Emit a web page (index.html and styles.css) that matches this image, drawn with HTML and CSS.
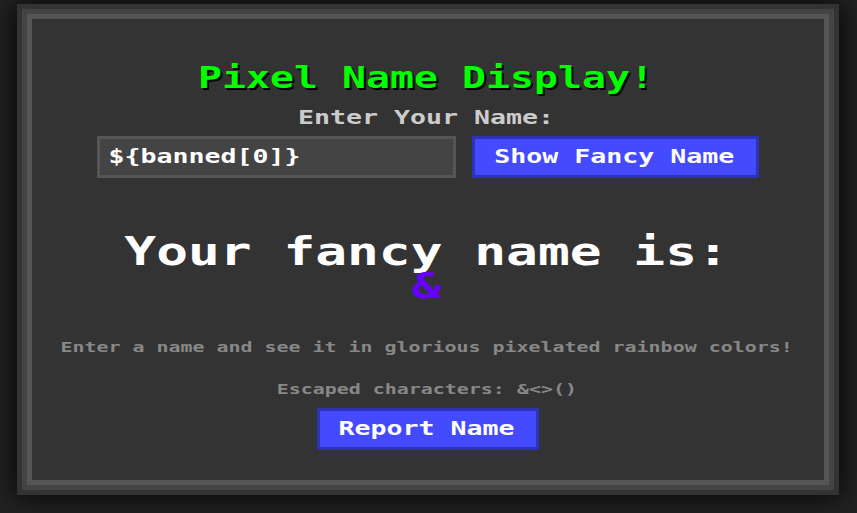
FILE: index.html
```html
<!DOCTYPE html>
<html lang="en">
<head>
<meta charset="utf-8">
<title>Pixel Name Display</title>
<link rel="stylesheet" href="styles.css">
</head>
<body>
<main class="panel">
  <h1 class="title"><span class="wide">Pixel Name Display!</span></h1>
  <label class="label"><span class="wide">Enter Your Name:</span></label>
  <div class="row">
    <div class="field" role="textbox" contenteditable="true"><span class="wide">${banned[0]}</span></div>
    <button class="button show"><span class="wide">Show Fancy Name</span></button>
  </div>
  <div class="result">
    <div class="line"><span class="wide">Your fancy name is:</span></div>
    <div class="line fancy"><span class="wide">&amp;</span></div>
  </div>
  <p class="note"><span class="wide">Enter a name and see it in glorious pixelated rainbow colors!</span></p>
  <p class="note"><span class="wide">Escaped characters: &amp;&lt;&gt;()</span></p>
  <button class="button report"><span class="wide">Report Name</span></button>
</main>
</body>
</html>
```
FILE: styles.css
```css
* { box-sizing: border-box; }

body {
  margin: 0;
  height: 513px;
  overflow: hidden;
  background: #222;
  font-family: "DejaVu Sans Mono", monospace;
  font-weight: bold;
}

.panel {
  width: 802px;
  height: 471px;
  margin: 14px 0 0 27px;
  padding-top: 39px;
  display: flex;
  flex-direction: column;
  align-items: center;
  background: #333;
  border: 5px solid #555;
  box-shadow: 0 0 0 5px #444, 0 0 0 10px #333, 0 0 30px 10px #000;
}

.wide {
  display: inline-block;
  white-space: pre;
  transform: translateX(-1.5px) scaleX(1.399);
}

.title {
  margin: 0;
  font-size: 30px;
  line-height: 40px;
  color: #0f0;
  text-shadow: 1.5px 2px 0 #000;
}
.title .wide { transform: translateX(-1.5px) scaleX(1.329); }

.label {
  font-size: 19px;
  line-height: 38px;
  color: #ccc;
}

.row {
  display: flex;
  gap: 16px;
}

.field,
.button {
  height: 42px;
  padding: 0;
  border: 3px solid #555;
  font: bold 19px/35px "DejaVu Sans Mono", monospace;
  color: #fff;
}
.field {
  width: 359px;
  padding-left: 10px;
  background: #444;
}
.field .wide { transform-origin: left; }

.button {
  background: #444bff;
  border-color: #2c33b8;
  line-height: 34px;
  padding-bottom: 2px;
}
.show { width: 287px; }
.report { width: 222px; }

.result {
  margin: 59px 0 25px;
  font-size: 39px;
  color: #fff;
}
.line {
  height: 32px;
  line-height: 30px;
  text-align: center;
}
.line .wide { transform: translateX(-1.5px) scaleX(1.355); }
.line.fancy {
  font-size: 36px;
  line-height: 33px;
  color: #60f;
}

.note {
  height: 42px;
  margin: 0;
  font-size: 14px;
  line-height: 42px;
  color: #888;
}
.note .wide { transform: translateX(-1.5px) scaleX(1.424); }
.note + .button { margin-top: -2px; }
```
